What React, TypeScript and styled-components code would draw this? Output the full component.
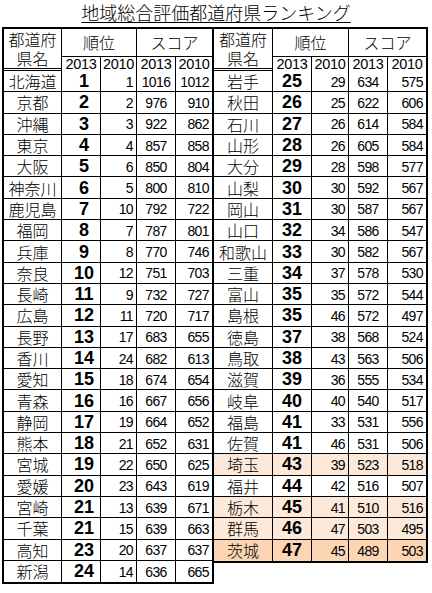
import React from 'react'
import styled, { createGlobalStyle } from 'styled-components'

type Row = [string, number, number, number, number, string?]

const leftRows: Row[] = [
    ['北海道', 1, 1, 1016, 1012],
    ['京都', 2, 2, 976, 910],
    ['沖縄', 3, 3, 922, 862],
    ['東京', 4, 4, 857, 858],
    ['大阪', 5, 6, 850, 804],
    ['神奈川', 6, 5, 800, 810],
    ['鹿児島', 7, 10, 792, 722],
    ['福岡', 8, 7, 787, 801],
    ['兵庫', 9, 8, 770, 746],
    ['奈良', 10, 12, 751, 703],
    ['長崎', 11, 9, 732, 727],
    ['広島', 12, 11, 720, 717],
    ['長野', 13, 17, 683, 655],
    ['香川', 14, 24, 682, 613],
    ['愛知', 15, 18, 674, 654],
    ['青森', 16, 16, 667, 656],
    ['静岡', 17, 19, 664, 652],
    ['熊本', 18, 21, 652, 631],
    ['宮城', 19, 22, 650, 625],
    ['愛媛', 20, 23, 643, 619],
    ['宮崎', 21, 13, 639, 671],
    ['千葉', 21, 15, 639, 663],
    ['高知', 23, 20, 637, 637],
    ['新潟', 24, 14, 636, 665]
]

const rightRows: Row[] = [
    ['岩手', 25, 29, 634, 575],
    ['秋田', 26, 25, 622, 606],
    ['石川', 27, 26, 614, 584],
    ['山形', 28, 26, 605, 584],
    ['大分', 29, 28, 598, 577],
    ['山梨', 30, 30, 592, 567],
    ['岡山', 31, 30, 587, 567],
    ['山口', 32, 34, 586, 547],
    ['和歌山', 33, 30, 582, 567],
    ['三重', 34, 37, 578, 530],
    ['富山', 35, 35, 572, 544],
    ['島根', 35, 46, 572, 497],
    ['徳島', 37, 38, 568, 524],
    ['鳥取', 38, 43, 563, 506],
    ['滋賀', 39, 36, 555, 534],
    ['岐阜', 40, 40, 540, 517],
    ['福島', 41, 33, 531, 556],
    ['佐賀', 41, 46, 531, 506],
    ['埼玉', 43, 39, 523, 518, '#fde9d9'],
    ['福井', 44, 42, 516, 507],
    ['栃木', 45, 41, 510, 516, '#fde9d9'],
    ['群馬', 46, 47, 503, 495, '#fde9d9'],
    ['茨城', 47, 45, 489, 503, '#fcd5b4']
]

const GlobalStyle = createGlobalStyle`
    body {
        margin: 0;
        background: #ffffff;
        font-family: "Noto Sans CJK JP", sans-serif;
        font-weight: 300;
        color: #000000;
    }
`

const Page = styled.div`
    width: 432px;
    height: 593px;
    overflow: hidden;
`

const Title = styled.h1`
    margin: 0;
    height: 27px;
    font-size: 18px;
    font-weight: 300;
    line-height: 25px;
    text-align: center;
    text-decoration: underline;
    text-underline-offset: 2px;
    text-decoration-thickness: 1px;
`

const Tables = styled.div`
    display: flex;
    align-items: flex-start;
    padding-left: 2px;
`

const Table = styled.table<{ $joined?: boolean }>`
    border-collapse: separate;
    border-spacing: 0;
    table-layout: fixed;
    border: 2px solid #000;
    border-left-width: ${(p) => (p.$joined ? 0 : 2)}px;
`

const Cell = styled.td`
    box-sizing: border-box;
    border-right: 1px solid #000;
    border-bottom: 1px solid #000;
    padding: 0;
    white-space: nowrap;
    &:last-child {
        border-right: none;
    }
    tr:last-child > & {
        border-bottom: none;
    }
`

const HeadCell = styled(Cell).attrs({ as: 'th' })<{ $year?: boolean }>`
    font-weight: 300;
    text-align: center;
    font-size: 16px;
    line-height: 19px;
    height: ${(p) => (p.$year ? 14 : 27)}px;
    ${(p) =>
        p.$year &&
        `
        font-family: "Liberation Sans", sans-serif;
        font-weight: normal;
        font-size: 14.5px;
        letter-spacing: -0.3px;
        line-height: 13px;
        padding-top: 1px;
        border-bottom: 3px double #000;
    `}
`

const NameHead = styled(HeadCell)`
    border-bottom: 3px double #000;
    line-height: 19px;
    vertical-align: top;
    padding-top: 1px;
`

const DataRow = styled.tr<{ $tint?: string }>`
    height: 21.3px;
    background: ${(p) => p.$tint || 'transparent'};
`

const NameCell = styled(Cell)`
    font-size: 16px;
    text-align: center;
    line-height: 20px;
`

const RankCell = styled(Cell)<{ $shift: number }>`
    font-family: "Liberation Sans", Arial, sans-serif;
    font-weight: bold;
    font-size: 18px;
    text-align: center;
    padding-left: ${(p) => p.$shift}px;
    line-height: 20px;
`

const NumCell = styled(Cell)<{ $align: 'right' | 'center' }>`
    font-family: "Liberation Sans", Arial, sans-serif;
    font-weight: normal;
    font-size: 14px;
    letter-spacing: -0.6px;
    text-align: ${(p) => p.$align};
    padding-right: ${(p) => (p.$align === 'right' ? 3 : 0)}px;
    padding-top: 2px;
    line-height: 17px;
`

const RankTable: React.FC<{ rows: Row[]; widths: number[]; joined?: boolean }> = ({
    rows,
    widths,
    joined
}) => (
    <Table $joined={joined}>
        <colgroup>
            {widths.map((w, i) => (
                <col key={i} style={{ width: w }} />
            ))}
        </colgroup>
        <thead>
            <tr>
                <NameHead rowSpan={2}>
                    都道府
                    <br />
                    県名
                </NameHead>
                <HeadCell colSpan={2}>順位</HeadCell>
                <HeadCell colSpan={2}>スコア</HeadCell>
            </tr>
            <tr>
                <HeadCell $year>2013</HeadCell>
                <HeadCell $year>2010</HeadCell>
                <HeadCell $year>2013</HeadCell>
                <HeadCell $year>2010</HeadCell>
            </tr>
        </thead>
        <tbody>
            {rows.map(([name, rank, prevRank, score, prevScore, tint]) => (
                <DataRow key={name} $tint={tint}>
                    <NameCell>{name}</NameCell>
                    <RankCell $shift={joined ? 0 : 6}>{rank}</RankCell>
                    <NumCell $align="right">{prevRank}</NumCell>
                    <NumCell $align="center">{score}</NumCell>
                    <NumCell $align="right">{prevScore}</NumCell>
                </DataRow>
            ))}
        </tbody>
    </Table>
)

const App: React.FC = () => (
    <Page>
        <GlobalStyle />
        <Title>地域総合評価都道府県ランキング</Title>
        <Tables>
            <RankTable rows={leftRows} widths={[58, 39, 36, 39, 36]} />
            <RankTable rows={rightRows} widths={[59, 39, 37, 39, 38]} joined />
        </Tables>
    </Page>
)

export default App
